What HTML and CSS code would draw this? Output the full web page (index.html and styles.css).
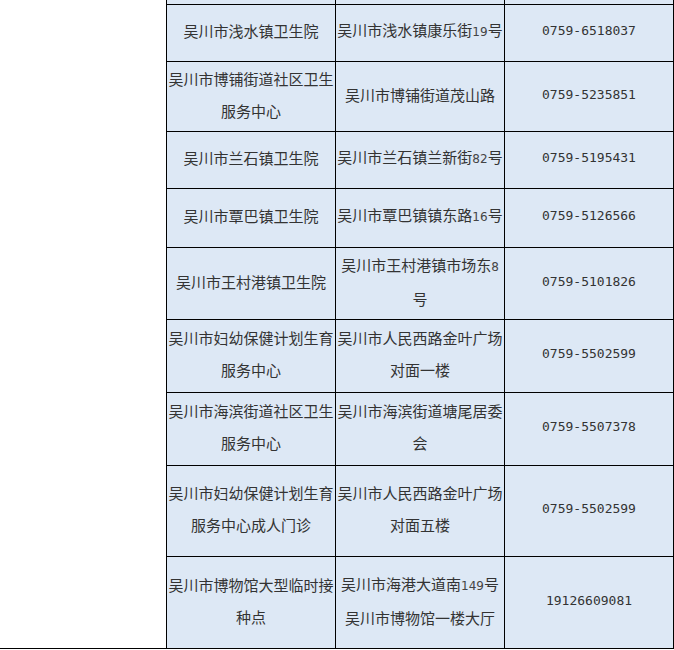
FILE: index.html
```html
<!DOCTYPE html>
<html lang="zh-CN">
<head>
<meta charset="utf-8">
<title>接种点</title>
<link rel="stylesheet" href="styles.css">
</head>
<body>
<table class="sites">
  <colgroup>
    <col class="c-area">
    <col class="c-col">
    <col class="c-col">
    <col class="c-col">
  </colgroup>
  <tbody>
    <tr class="h5">
      <td class="area" rowspan="10"></td>
      <td></td><td></td><td></td>
    </tr>
    <tr class="h57">
      <td>吴川市浅水镇卫生院</td>
      <td>吴川市浅水镇康乐街<span class="num">19</span>号</td>
      <td class="tel">0759-6518037</td>
    </tr>
    <tr class="h70">
      <td>吴川市博铺街道社区卫生<br>服务中心</td>
      <td>吴川市博铺街道茂山路</td>
      <td class="tel">0759-5235851</td>
    </tr>
    <tr class="h57">
      <td>吴川市兰石镇卫生院</td>
      <td>吴川市兰石镇兰新街<span class="num">82</span>号</td>
      <td class="tel">0759-5195431</td>
    </tr>
    <tr class="h59">
      <td>吴川市覃巴镇卫生院</td>
      <td>吴川市覃巴镇镇东路<span class="num">16</span>号</td>
      <td class="tel">0759-5126566</td>
    </tr>
    <tr class="h72">
      <td>吴川市王村港镇卫生院</td>
      <td>吴川市王村港镇市场东<span class="num">8</span><br>号</td>
      <td class="tel">0759-5101826</td>
    </tr>
    <tr class="h73">
      <td>吴川市妇幼保健计划生育<br>服务中心</td>
      <td>吴川市人民西路金叶广场<br>对面一楼</td>
      <td class="tel">0759-5502599</td>
    </tr>
    <tr class="h73">
      <td>吴川市海滨街道社区卫生<br>服务中心</td>
      <td>吴川市海滨街道塘尾居委<br>会</td>
      <td class="tel">0759-5507378</td>
    </tr>
    <tr class="h91">
      <td>吴川市妇幼保健计划生育<br>服务中心成人门诊</td>
      <td>吴川市人民西路金叶广场<br>对面五楼</td>
      <td class="tel">0759-5502599</td>
    </tr>
    <tr class="h92">
      <td>吴川市博物馆大型临时接<br>种点</td>
      <td>吴川市海港大道南<span class="num">149</span>号<br>吴川市博物馆一楼大厅</td>
      <td class="tel">19126609081</td>
    </tr>
  </tbody>
</table>
</body>
</html>
```
FILE: styles.css
```css
html, body {
  margin: 0;
  padding: 0;
  background: #ffffff;
  overflow: hidden;
}

.sites {
  width: 674px;
  table-layout: fixed;
  border-collapse: separate;
  border-spacing: 0;
  font-family: "Noto Sans CJK SC", "Noto Sans", sans-serif;
  font-size: 15px;
  line-height: 32px;
  color: #333333;
}

.c-area { width: 167px; }
.c-col { width: 169px; }

.sites td {
  padding: 0 0 4px 0;
  background: #dde8f5;
  border-right: 1px solid #000000;
  border-bottom: 1px solid #000000;
  text-align: center;
  vertical-align: middle;
  white-space: nowrap;
  overflow: hidden;
}

.sites td.area {
  background: #ffffff;
}

.num {
  font-family: "DejaVu Sans", "Liberation Sans", sans-serif;
  font-size: 12px;
  color: #444444;
}

.sites td.tel {
  font-family: "DejaVu Sans Mono", "Liberation Mono", monospace;
  font-size: 13px;
  color: #333333;
}

.h5 { height: 5px; }
.h5 td { line-height: 0; font-size: 0; padding: 0; }
.h57 { height: 57px; }
.h59 { height: 59px; }
.h70 { height: 70px; }
.h72 { height: 72px; }
.h73 { height: 73px; }
.h91 { height: 91px; }
.h92 { height: 92px; }
```
